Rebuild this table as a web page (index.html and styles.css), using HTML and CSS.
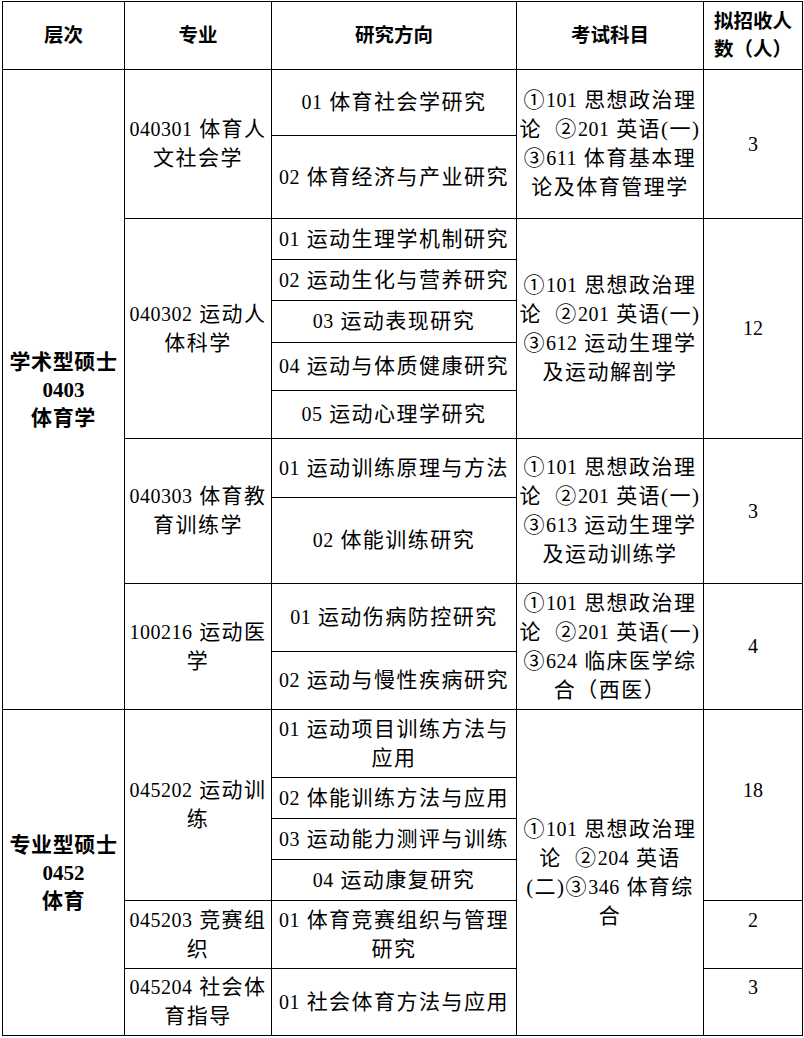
FILE: index.html
```html
<!DOCTYPE html>
<html lang="zh-CN">
<head>
<meta charset="utf-8">
<title>招生专业目录</title>
<link rel="stylesheet" href="styles.css">
</head>
<body>
<table class="plan">
  <colgroup>
    <col class="c1"><col class="c2"><col class="c3"><col class="c4"><col class="c5">
  </colgroup>
  <thead>
    <tr class="h68">
      <th>层次</th>
      <th>专业</th>
      <th>研究方向</th>
      <th>考试科目</th>
      <th>拟招收人<br>数（人）</th>
    </tr>
  </thead>
  <tbody>
    <tr class="h66">
      <td rowspan="11" class="level">学术型硕士<br><span class="b">0403</span><br>体育学</td>
      <td rowspan="2"><span class="n">040301</span> 体育人<br>文社会学</td>
      <td><span class="n">01</span> 体育社会学研究</td>
      <td rowspan="2">①<span class="n">101</span> 思想政治理<br>论&nbsp; ②<span class="n">201</span> 英语(一)<br>③<span class="n">611</span> 体育基本理<br>论及体育管理学</td>
      <td rowspan="2" class="num">3</td>
    </tr>
    <tr class="h83">
      <td><span class="n">02</span> 体育经济与产业研究</td>
    </tr>
    <tr class="h41">
      <td rowspan="5"><span class="n">040302</span> 运动人<br>体科学</td>
      <td><span class="n">01</span> 运动生理学机制研究</td>
      <td rowspan="5">①<span class="n">101</span> 思想政治理<br>论&nbsp; ②<span class="n">201</span> 英语(一)<br>③<span class="n">612</span> 运动生理学<br>及运动解剖学</td>
      <td rowspan="5" class="num">12</td>
    </tr>
    <tr class="h41">
      <td><span class="n">02</span> 运动生化与营养研究</td>
    </tr>
    <tr class="h42">
      <td><span class="n">03</span> 运动表现研究</td>
    </tr>
    <tr class="h48">
      <td><span class="n">04</span> 运动与体质健康研究</td>
    </tr>
    <tr class="h48">
      <td><span class="n">05</span> 运动心理学研究</td>
    </tr>
    <tr class="h59">
      <td rowspan="2"><span class="n">040303</span> 体育教<br>育训练学</td>
      <td><span class="n">01</span> 运动训练原理与方法</td>
      <td rowspan="2">①<span class="n">101</span> 思想政治理<br>论&nbsp; ②<span class="n">201</span> 英语(一)<br>③<span class="n">613</span> 运动生理学<br>及运动训练学</td>
      <td rowspan="2" class="num">3</td>
    </tr>
    <tr class="h86">
      <td><span class="n">02</span> 体能训练研究</td>
    </tr>
    <tr class="h68">
      <td rowspan="2"><span class="n">100216</span> 运动医<br>学</td>
      <td><span class="n">01</span> 运动伤病防控研究</td>
      <td rowspan="2">①<span class="n">101</span> 思想政治理<br>论&nbsp; ②<span class="n">201</span> 英语(一)<br>③<span class="n">624</span> 临床医学综<br>合（西医）</td>
      <td rowspan="2" class="num">4</td>
    </tr>
    <tr class="h58">
      <td><span class="n">02</span> 运动与慢性疾病研究</td>
    </tr>
    <tr class="h68">
      <td rowspan="6" class="level">专业型硕士<br><span class="b">0452</span><br>体育</td>
      <td rowspan="4"><span class="n">045202</span> 运动训<br>练</td>
      <td><span class="n">01</span> 运动项目训练方法与<br>应用</td>
      <td rowspan="6">①<span class="n">101</span> 思想政治理<br>论&nbsp; ②<span class="n">204</span> 英语<br>(二)③<span class="n">346</span> 体育综<br>合</td>
      <td rowspan="4" class="num up">18</td>
    </tr>
    <tr class="h41">
      <td><span class="n">02</span> 体能训练方法与应用</td>
    </tr>
    <tr class="h41">
      <td><span class="n">03</span> 运动能力测评与训练</td>
    </tr>
    <tr class="h41">
      <td><span class="n">04</span> 运动康复研究</td>
    </tr>
    <tr class="h68">
      <td><span class="n">045203</span> 竞赛组<br>织</td>
      <td><span class="n">01</span> 体育竞赛组织与管理<br>研究</td>
      <td class="num up">2</td>
    </tr>
    <tr class="h67">
      <td><span class="n">045204</span> 社会体<br>育指导</td>
      <td><span class="n">01</span> 社会体育方法与应用</td>
      <td class="num up">3</td>
    </tr>
  </tbody>
</table>
</body>
</html>
```

FILE: styles.css
```css
html, body {
  margin: 0;
  padding: 0;
  background: #ffffff;
}

body {
  padding: 1px 0 0 2px;
}

.plan {
  border-collapse: collapse;
  table-layout: fixed;
  width: 800px;
  color: #000;
  font-family: "Liberation Serif", "Noto Sans CJK SC", serif;
  font-size: 21px;
  letter-spacing: 1.5px;
  line-height: 29px;
}

.c1 { width: 122px; }
.c2 { width: 147px; }
.c3 { width: 245px; }
.c4 { width: 187px; }
.c5 { width: 99px; }

.plan th,
.plan td {
  border: 1px solid #000;
  padding: 0;
  text-align: center;
  vertical-align: middle;
  white-space: nowrap;
  overflow: hidden;
}

.plan th {
  font-family: "Liberation Serif", "Noto Sans CJK SC", serif;
  font-weight: bold;
  font-size: 19.5px;
  letter-spacing: 0;
  line-height: 28px;
}

.plan .level {
  font-weight: bold;
  font-size: 21px;
  letter-spacing: 0.6px;
  line-height: 28px;
}

.b {
  font-size: 21px;
  letter-spacing: 0;
}

.n {
  font-size: 20px;
  letter-spacing: 0.5px;
}

.num {
  font-size: 20px;
  letter-spacing: 0;
}

.num.up {
  padding-bottom: 29px;
}

.h41 { height: 41px; }
.h42 { height: 42px; }
.h48 { height: 48px; }
.h58 { height: 58px; }
.h59 { height: 59px; }
.h66 { height: 66px; }
.h67 { height: 67px; }
.h68 { height: 68px; }
.h83 { height: 83px; }
.h86 { height: 86px; }
```
